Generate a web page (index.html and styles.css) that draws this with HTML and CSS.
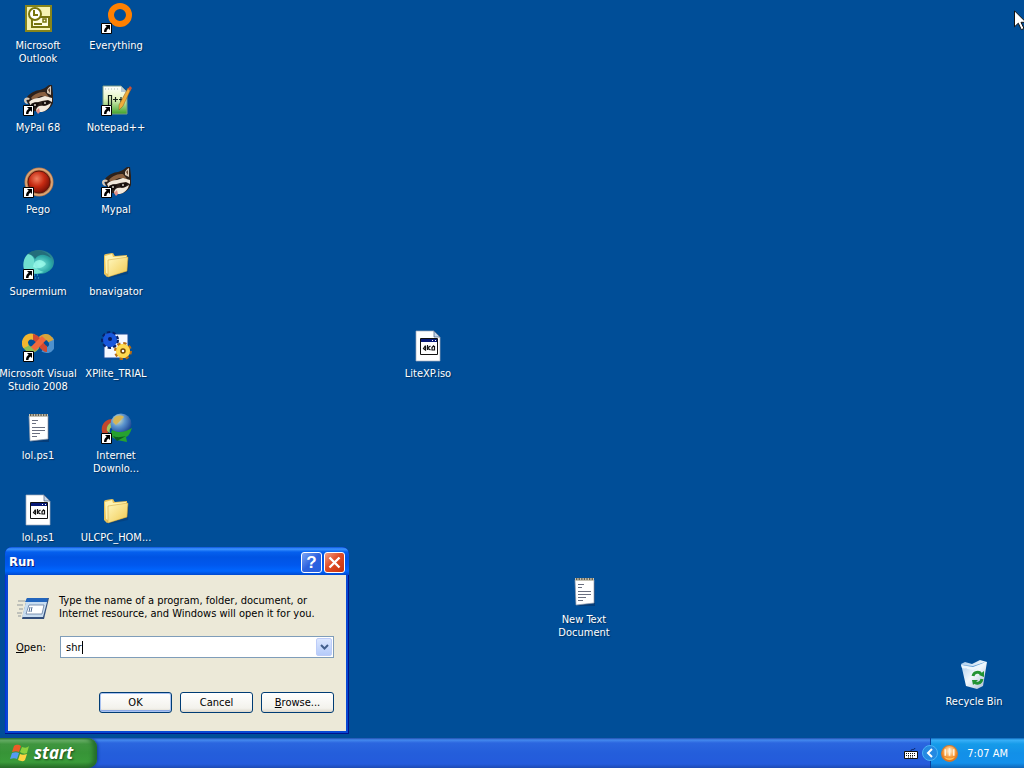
FILE: index.html
```html
<!DOCTYPE html>
<html lang="en">
<head>
<meta charset="utf-8">
<title>Desktop</title>
<link rel="stylesheet" href="styles.css">
</head>
<body>
<svg class="defs" aria-hidden="true">
  <defs>
    <linearGradient id="folderFill" x1="0" y1="0" x2="1" y2="1"><stop offset="0" stop-color="#fff7bd"/><stop offset="1" stop-color="#f0c950"/></linearGradient>
    <radialGradient id="redBall" cx=".4" cy=".35" r=".7"><stop offset="0" stop-color="#f08060"/><stop offset=".5" stop-color="#c62a12"/><stop offset="1" stop-color="#6d0d05"/></radialGradient>
    <radialGradient id="tealBall" cx=".55" cy=".6" r=".6"><stop offset="0" stop-color="#7eeadb"/><stop offset=".6" stop-color="#2aa5a5"/><stop offset="1" stop-color="#2b6f80"/></radialGradient>
    <radialGradient id="globe" cx=".35" cy=".3" r=".75"><stop offset="0" stop-color="#e4e8b8"/><stop offset=".45" stop-color="#5c95cf"/><stop offset="1" stop-color="#143d8c"/></radialGradient>
    <linearGradient id="npGreen" x1="0" y1="0" x2="0" y2="1"><stop offset="0" stop-color="#fff"/><stop offset=".45" stop-color="#e7f5c4"/><stop offset="1" stop-color="#3fa32a"/></linearGradient>
    <linearGradient id="bin" x1="0" y1="0" x2="1" y2="1"><stop offset="0" stop-color="#9fc6ea"/><stop offset=".5" stop-color="#f2f8fc"/><stop offset="1" stop-color="#a4b6cf"/></linearGradient>
    <radialGradient id="orangeBall" cx=".5" cy=".35" r=".65"><stop offset="0" stop-color="#fff3d6"/><stop offset=".6" stop-color="#f79a3a"/><stop offset="1" stop-color="#e0690f"/></radialGradient>
    <symbol id="arrow" viewBox="0 0 32 32">
      <path fill="#fff" stroke="#000" d="M1.500 21.500h10v10h-10z"/>
      <path d="M5 23h5v5l-1.500-1.500C7 27.500 6.500 28.500 6.500 30H4c0-2.500 1-4.300 2.700-5.300z"/>
    </symbol>
    <symbol id="raccoon" viewBox="0 0 32 32">
      <path fill="#2d211b" d="M5 13c3-4 9-7 13-7 4-1 6-3 9-5l3 0 1 9v9c-2 5-6 8-11 9l-8-1-7-9z"/>
      <path fill="#d8c9b8" d="M25 6c1-2 2-3 4-4v9l-4-2zM2 16c1-3 4-3 6-1l-2 1c-2-1-2 1-1 2l1 2c-3 0-4-2-4-4z"/>
      <path fill="#6b4a34" d="M26 6l2-2v5z"/>
      <path fill="#8a6040" d="M9 14c4-5 9-6 14-6l4 5-8-1-8 4z"/>
      <path fill="#f2e9dc" d="M7 18c3-3 6-4 10-4l6-2 7 2v4l-4-2-6 1-7 2-4 3z"/>
      <path fill="#170f0d" d="M9 20c3-2 6-2 8-1l-2 4-5 1zM20 18c3-1 5-1 8-1l-3 4h-5z"/>
      <path fill="#f2e9dc" d="M14 26c1-4 4-5 8-4 2 0 5-2 7-3-1 5-5 8-9 9h-5z"/>
      <circle cx="13" cy="21" r="1" fill="#d7d1c6"/><circle cx="23" cy="19" r="1" fill="#d7d1c6"/>
      <path fill="#e28c85" d="M14 27l3-3 1 4-2 2z"/>
    </symbol>
    <symbol id="folder" viewBox="0 0 32 32">
      <path fill="#07376c" opacity=".5" d="M6 27l3 3 19-4 1-14z"/>
      <path fill="#e9c35b" d="M4 8q0-2 2-2l6-1q2 0 2 2l1 1 12-1v16l-20 6-3-3z"/>
      <path fill="#fff3b0" d="M5 8l7-2 1 3 13-1v3L8 13v13l-2-1z"/>
      <path fill="url(#folderFill)" stroke="#c99f35" stroke-width=".5" d="M8 12l20-3-1 14-19 6z"/>
    </symbol>
    <symbol id="notes" viewBox="0 0 32 32">
      <path fill="#092f60" opacity=".55" d="M10 30h17V6z"/>
      <path fill="#fff" stroke="#949cac" stroke-width=".7" d="M7 4h19v23L8 29z"/>
      <path fill="#c4c2b5" d="M7 2h19v3H7z"/>
      <path stroke="#655f4c" stroke-width="2" stroke-dasharray="1.300 1.300" d="M8 3h18"/>
      <path stroke="#6a6f80" d="M10 8.500h6M10 11.500h4M10 15.500h13M10 18.500h13M10 21.500h8M10 24.500h5"/>
    </symbol>
    <symbol id="appfile" viewBox="0 0 32 32">
      <path fill="#fff" stroke="#a5adba" stroke-width=".7" d="M4 1h18l6 6v24H4z"/>
      <path fill="#c5d6ea" stroke="#465d83" stroke-width=".7" d="M22 1v6h6z"/>
      <path fill="#fff" stroke="#111" d="M8.500 8.500h17v16h-17z"/>
      <path fill="#071977" d="M9 9h16v3H9z"/><path fill="#fff" d="M20 10h1v1h-1zm3 0h1v1h-1z"/>
      <path fill="none" stroke="#111" stroke-width="1.200" d="M13.500 15.500l-2 3 2 1.500v-4M15.500 15v5m3-4l-3 2 3 2M22 15.500l-2 2v2.500h2.500v-4"/>
    </symbol>
  </defs>
</svg>

<main class="desktop">
  <a class="item" href="#"><svg class="icon" viewBox="0 0 32 32"><path fill="#88851b" d="M3 3h27v27H3z"/><path fill="#f6f3b2" d="M5 5h23v23H5z"/><path fill="#fffde1" stroke="#77750f" stroke-width="2" d="M10 15h17v10H10z"/><circle cx="13" cy="12" r="6" fill="#fff" stroke="#77750f" stroke-width="2"/><path fill="none" stroke="#77750f" stroke-width="2" d="M12 8v5h4M12 22h8"/><path fill="none" stroke="#77750f" stroke-width="1.500" d="M21 17h3v3h-3z"/></svg><span class="label">Microsoft Outlook</span></a>
  <a class="item" href="#"><svg class="icon" viewBox="0 0 32 32"><circle cx="20" cy="13" r="9" fill="none" stroke="#ff8000" stroke-width="6"/><use href="#arrow"/></svg><span class="label">Everything</span></a>
  <a class="item" href="#"><svg class="icon" viewBox="0 0 32 32"><use href="#raccoon"/><use href="#arrow"/></svg><span class="label">MyPal 68</span></a>
  <a class="item" href="#"><svg class="icon" viewBox="0 0 32 32"><path fill="url(#npGreen)" stroke="#789b83" d="M3 2h18l6 6v22H3z"/><path fill="#b9cad1" d="M21 2v6h6z"/><path stroke="#a5bcb4" stroke-dasharray="1 2" d="M5 5h15"/><path fill="none" stroke="#17231a" stroke-width="1.200" d="M8.500 21V11.500h3V21M13 15.500h5m-2.500-2.500v5M19 15.500h4m-2-2.500v5"/><path fill="#f0ad3b" stroke="#875c21" stroke-width=".5" d="M28 4l3 1-8 17-4 4v-5z"/><path fill="#ca5137" d="M28 5l2-3 2 2-2 3z"/><use href="#arrow"/></svg><span class="label">Notepad++</span></a>
  <a class="item" href="#"><svg class="icon" viewBox="0 0 32 32"><circle cx="17" cy="16" r="14.500" fill="#b2774e"/><circle cx="17" cy="16" r="13" fill="none" stroke="#dda777" stroke-width="1.500"/><circle cx="17" cy="16" r="11" fill="url(#redBall)" stroke="#5f170b"/><use href="#arrow"/></svg><span class="label">Pego</span></a>
  <a class="item" href="#"><svg class="icon" viewBox="0 0 32 32"><use href="#raccoon"/><use href="#arrow"/></svg><span class="label">Mypal</span></a>
  <a class="item" href="#"><svg class="icon" viewBox="0 0 32 32"><ellipse cx="17" cy="14" rx="15" ry="12" fill="url(#tealBall)"/><path fill="#236e7b" d="M6 6c6-6 19-4 23 4-5-4-12-5-16 1-1-3-4-5-7-5z"/><path fill="#70e0d0" d="M6 6c5 1 7 5 6 9 2 6 6 8 10 9-8 3-16 2-19-1C0 19 1 10 6 6z"/><path fill="#a3fff0" opacity=".7" d="M12 15c4-5 9-3 12 1-4 5-9 5-13 3z"/><path stroke="#40bdcb" stroke-dasharray="1 2" d="M12 27h5M13 30h4"/><use href="#arrow"/></svg><span class="label">Supermium</span></a>
  <a class="item" href="#"><svg class="icon" viewBox="0 0 32 32"><use href="#folder"/></svg><span class="label">bnavigator</span></a>
  <a class="item" href="#"><svg class="icon" viewBox="0 0 32 32"><g fill="none" stroke-width="6"><path stroke="#8bbd56" d="M3 13c1 7 8 9 12 3"/><path stroke="#4e91ce" d="M21 19c7 4 12-4 7-10"/><path stroke="#f2b630" d="M12 7C5 5 1 11 4 17"/><path stroke="#d6a43b" d="M29 11C26 5 21 6 16 12"/><path stroke="#d04931" d="M11 7c6 0 8 12 14 12"/><path stroke="#ef693d" d="M11 19l11-11"/></g><use href="#arrow"/></svg><span class="label">Microsoft Visual Studio 2008</span></a>
  <a class="item" href="#"><svg class="icon" viewBox="0 0 32 32"><path fill="#f5f8ff" stroke="#164b9a" d="M4 4h24v24H4z"/><circle cx="10" cy="10" r="7" fill="#0a42bf" stroke="#062269" stroke-width="4" stroke-dasharray="3 2"/><circle cx="10" cy="10" r="7" fill="#1857dc"/><circle cx="10" cy="9" r="2" fill="#061a59"/><circle cx="23" cy="21" r="7" fill="#ffd13c" stroke="#b76b13" stroke-width="4" stroke-dasharray="3 2.500"/><circle cx="23" cy="21" r="7" fill="#ffda51"/><circle cx="23" cy="21" r="2" fill="#fff" stroke="#744707" stroke-width="1.500"/></svg><span class="label">XPlite_TRIAL</span></a>
  <a class="item" href="#"><svg class="icon" viewBox="0 0 32 32"><use href="#notes"/></svg><span class="label">lol.ps1</span></a>
  <a class="item" href="#"><svg class="icon" viewBox="0 0 32 32"><path fill="#c3472c" d="M3 23C-1 14 5 6 14 7l-3 5C7 12 6 17 9 22z"/><path fill="#a6c65d" d="M7 19c-1-5 2-9 8-9l-2 5c-3 0-4 3-3 6z"/><circle cx="21" cy="12" r="10.500" fill="url(#globe)"/><path fill="#d5b657" d="M14 6c3-3 8-3 10-1l-4 4-4 4-3-3z"/><path fill="#26a12f" d="M12 18c6 3 12 3 20-2-2 5-3 8-6 9l1 5-10-2-7-4z"/><path fill="#0c611f" d="M13 24c5 2 8 1 13 0l-9 5z"/><use href="#arrow"/></svg><span class="label">Internet Downlo...</span></a>
  <a class="item" href="#"><svg class="icon" viewBox="0 0 32 32"><use href="#appfile"/></svg><span class="label">lol.ps1</span></a>
  <a class="item" href="#"><svg class="icon" viewBox="0 0 32 32"><use href="#folder"/></svg><span class="label">ULCPC_HOM...</span></a>
  <a class="item item-iso" href="#"><svg class="icon" viewBox="0 0 32 32"><use href="#appfile"/></svg><span class="label">LiteXP.iso</span></a>
  <a class="item item-text" href="#"><svg class="icon" viewBox="0 0 32 32"><use href="#notes"/></svg><span class="label">New Text Document</span></a>
  <a class="item item-bin" href="#"><svg class="icon" viewBox="0 0 32 32"><path fill="url(#bin)" d="M3 6l4-2 7 2 8-4 7 2-4 24-6 3-11-3z"/><path fill="#5c9bd4" d="M5 7l10 1 12-4-8 6-11 1z"/><path fill="#edf7fd" d="M3 7l12 2 13-5-1 3-12 5-11-2z"/><path fill="none" stroke="#239334" stroke-width="3" d="M15 18c1-4 6-5 8-2M24 21c-1 5-6 5-8 3"/><path fill="#239334" d="M21 17l5-4 0 6zM14 22l6 0-5 5z"/></svg><span class="label">Recycle Bin</span></a>

  <form class="window" onsubmit="return false">
    <header class="titlebar">
      <h1 class="title">Run</h1>
      <button class="caption help" type="button" aria-label="Help">?</button>
      <button class="caption close" type="button" aria-label="Close"><svg viewBox="0 0 19 19"><path fill="none" stroke="#fff" stroke-width="2.400" d="M4.500 4.500l10 10m0-10l-10 10"/></svg></button>
    </header>
    <div class="content">
      <div class="intro">
        <svg class="run-icon" viewBox="0 0 32 26"><path fill="#334f7c" d="M10 2h22l-5 21H5z"/><path fill="#c8ddf1" d="M9 6h21l-4 15H5z"/><path fill="#2265bc" d="M10 2h21l-1 4H8z"/><path fill="#fff" stroke="#637c9f" stroke-width=".8" d="M12 9h15l-2 9H9z"/><path stroke="#506c93" d="M13 11l-1 5m3-5l-1 5"/><path stroke="#92999d" d="M1 5h7M0 9h6M2 13h4M0 17h5M1 20h3"/></svg>
        <p class="message">Type the name of a program, folder, document, or Internet resource, and Windows will open it for you.</p>
      </div>
      <div class="field">
        <label class="open-label" for="open"><u>O</u>pen:</label>
        <div class="combo">
          <input class="open" id="open" type="text" value="shr">
          <span class="caret"></span>
          <button class="drop" type="button" aria-label="Show list"><svg viewBox="0 0 9 7"><path fill="none" stroke="#435f8c" stroke-width="2" d="M1 1l3.500 3.500L8 1"/></svg></button>
        </div>
      </div>
      <div class="actions">
        <button class="btn default" type="submit">OK</button>
        <button class="btn" type="button">Cancel</button>
        <button class="btn" type="button"><u>B</u>rowse...</button>
      </div>
    </div>
  </form>
  <svg class="pointer" viewBox="0 0 12 21"><path fill="#fff" stroke="#111" d="M.5.8v16l3.800-3.600 3 6.500 2.700-1.200-3-6.200h5z"/></svg>
</main>

<footer class="taskbar">
  <button class="start" type="button">
    <svg class="flag" viewBox="0 0 20 20"><path fill="#ed5b27" d="M4 3c3-2 5-1 7 0L9 9C7 8 5 8 2 9z"/><path fill="#8bd13e" d="M12 4c3 1 5 1 7-1l-2 7c-2 1-4 1-7-1z"/><path fill="#559bf2" d="M2 10c3-1 5-1 7 0l-2 6c-2-1-4-1-7 0z"/><path fill="#fdd442" d="M10 11c2 1 4 1 7 0l-2 6c-2 2-4 1-7 0z"/></svg>
    <span>start</span>
  </button>
  <div class="tasks"><svg class="keyboard" viewBox="0 0 14 12"><path fill="none" stroke="#0b2360" d="M7 4c0-3 3 0 4-3"/><path fill="#fff" stroke="#111" d="M.5 4.500h13v7H.5z"/><path stroke="#111" stroke-dasharray="1 1" d="M2 6.500h10M2 8.500h10M4 10h6"/></svg></div>
  <div class="tray">
    <button class="expand" type="button" aria-label="Show hidden icons"><svg viewBox="0 0 16 16"><circle cx="8" cy="8" r="7.500" fill="#2489e2" stroke="#4bb3f4"/><path fill="none" stroke="#fff" stroke-width="2" d="M10 4L6 8l4 4"/></svg></button>
    <svg class="tray-icon" viewBox="0 0 16 16"><circle cx="8" cy="8" r="7.500" fill="url(#orangeBall)" stroke="#c97b36"/><path fill="none" stroke="#fff2da" stroke-width="1.500" d="M4 4v6m4-7v7m4-6v6"/><path fill="#ffc65a" d="M3 11c3 2 7 2 10 0-2 4-8 4-10 0z"/></svg>
    <time class="clock">7:07 AM</time>
  </div>
</footer>
</body>
</html>
```
FILE: styles.css
```css
* { box-sizing: border-box; }

body {
  display: flex;
  flex-direction: column;
  height: 100vh;
  margin: 0;
  overflow: hidden;
  background: #004e98;
  font: 11px/13px "DejaVu Sans Condensed", "DejaVu Sans", sans-serif;
}

button, input { margin: 0; font: inherit; color: inherit; }
svg { display: block; }

.defs { position: absolute; width: 0; height: 0; }

.desktop {
  position: relative;
  flex: 1;
  min-height: 0;
  display: grid;
  grid-template-columns: repeat(auto-fill, 78px);
  grid-auto-rows: 82px;
  align-content: start;
  margin-left: -1px;
}

.item {
  display: flex;
  flex-direction: column;
  align-items: center;
  gap: 5px;
  padding-top: 2px;
  color: #fff;
  text-align: center;
  text-decoration: none;
}
.item:nth-of-type(odd) { grid-column: 1; }
.item:nth-of-type(even) { grid-column: 2; }
.icon { width: 32px; height: 32px; flex: none; }
.label { text-shadow: 1px 1px 1px #00305f; }
.desktop .item-iso { grid-area: 5 / 6; }
.desktop .item-text { grid-area: 8 / 8; }
.desktop .item-bin { grid-area: 9 / 13; }

.window {
  position: absolute;
  left: 6px;
  bottom: 4px;
  width: 344px;
  padding: 0 3px 3px;
  border-radius: 7px 7px 0 0;
  background: #0748d4;
  box-shadow: inset 0 -1px #00138c, inset -1px 0 #00138c, inset 1px 0 #0831d9;
}
.titlebar {
  display: flex;
  align-items: center;
  gap: 2px;
  height: 28px;
  margin: 0 -3px;
  padding: 2px 4px 0;
  border-radius: 7px 7px 0 0;
  background: linear-gradient(#0a52dc 0, #3d95ff 2px, #0560ee 5px, #0054e3 10px, #0058ee 18px, #0066ff 24px, #0049cf 100%);
}
.title {
  flex: 1;
  margin: 0;
  color: #fff;
  font: bold 13px/16px "DejaVu Sans Condensed", "DejaVu Sans", sans-serif;
  text-shadow: 1px 1px #0b1f7c;
}
.caption {
  display: grid;
  place-items: center;
  width: 21px;
  height: 21px;
  padding: 0;
  border: 1px solid #fff;
  border-radius: 3px;
  color: #fff;
  font: bold 17px/19px "Liberation Sans", sans-serif;
}
.caption svg { width: 19px; height: 19px; }
.help { background: linear-gradient(135deg, #7da6f5, #2e62df 50%, #2560e0); }
.close { background: linear-gradient(135deg, #f0a088, #e04b25 45%, #c6330d); }

.content { padding: 19px 12px 18px 8px; background: #ece9d8; }
.intro { display: flex; gap: 10px; padding-left: 1px; }
.run-icon { width: 32px; height: 26px; margin-top: 2px; flex: none; }
.message { max-width: 270px; margin: 0; }
.field { display: flex; align-items: center; margin-top: 14px; }
.open-label { width: 44px; flex: none; }
.combo {
  position: relative;
  flex: 1;
  display: flex;
  height: 22px;
  padding: 1px;
  border: 1px solid #7f9db9;
  background: #fff;
}
.open {
  flex: 1;
  min-width: 0;
  padding: 0 4px;
  border: 0;
  background: transparent;
  outline: 0;
}
.caret { position: absolute; left: 21px; top: 4px; width: 1px; height: 13px; background: #000; }
.drop {
  display: grid;
  place-items: center;
  width: 16px;
  padding: 0;
  border: 1px solid #bdccf8;
  border-radius: 2px;
  background: linear-gradient(#dce7ff, #b5cbfa);
}
.drop svg { width: 9px; height: 7px; }
.actions { display: flex; justify-content: flex-end; gap: 8px; margin-top: 34px; }
.btn {
  width: 73px;
  height: 21px;
  padding: 0;
  border: 1px solid #003c74;
  border-radius: 3px;
  background: linear-gradient(#fff, #f3f2ec 80%, #dcd7cb);
}
.btn.default { box-shadow: inset 0 0 0 1px #a9c2f0, inset 0 -2px #8ba8e4; }

.pointer { position: absolute; right: -2px; top: 10px; width: 12px; height: 21px; }

.taskbar {
  display: flex;
  height: 30px;
  flex: none;
  background: linear-gradient(#1f4fae 0, #4489ee 2px, #2b66df 5px, #245edb 15px, #245bdc 26px, #1d4ab4 100%);
}
.start {
  display: flex;
  align-items: center;
  gap: 4px;
  width: 97px;
  padding: 0 0 1px 10px;
  border: 0;
  border-radius: 0 9px 9px 0;
  background: linear-gradient(#2c782c 0, #6fb46c 2px, #3f953f 6px, #379437 15px, #3a9b3a 24px, #286e28 100%);
  box-shadow: inset -4px 0 4px #246d2a, 1px 0 3px #173f94;
  color: #fff;
  font: italic bold 17px/20px "Open Sans", "Liberation Sans", sans-serif;
  text-shadow: 1px 1px 2px #1b4a1b;
}
.flag { width: 20px; height: 20px; }
.tasks { display: flex; flex: 1; align-items: center; justify-content: flex-end; padding-right: 12px; }
.keyboard { width: 14px; height: 12px; }
.tray {
  display: flex;
  align-items: center;
  padding-right: 16px;
  border-left: 1px solid #0b3f9c;
  background: linear-gradient(#0d64b8 0, #39b0f8 2px, #169be9 6px, #1290e8 15px, #1390eb 25px, #0f66b8 100%);
  color: #fff;
}
.expand { width: 16px; height: 16px; margin-left: -9px; padding: 0; border: 0; background: none; }
.tray-icon { width: 17px; height: 17px; margin-left: 3px; }
.clock { margin-left: 9px; }
```
